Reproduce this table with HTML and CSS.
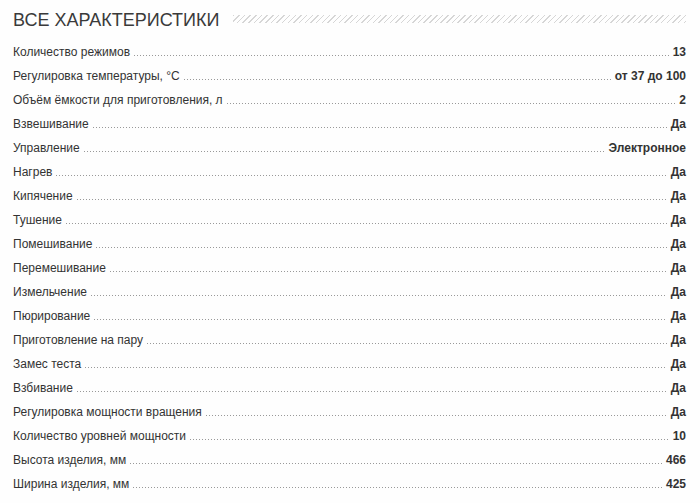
FILE: index.html
```html
<!DOCTYPE html>
<html lang="ru">
<head>
<meta charset="utf-8">
<title>Все характеристики</title>
<link rel="stylesheet" href="styles.css">
</head>
<body>
<div class="specs">
  <div class="heading">
    <h2 class="title">ВСЕ ХАРАКТЕРИСТИКИ</h2>
    <div class="hatch"></div>
  </div>
  <ul class="list">
    <li class="row"><span class="label">Количество режимов</span><span class="dots"></span><span class="value">13</span></li>
    <li class="row"><span class="label">Регулировка температуры, °C</span><span class="dots"></span><span class="value">от 37 до 100</span></li>
    <li class="row"><span class="label">Объём ёмкости для приготовления, л</span><span class="dots"></span><span class="value">2</span></li>
    <li class="row"><span class="label">Взвешивание</span><span class="dots"></span><span class="value">Да</span></li>
    <li class="row"><span class="label">Управление</span><span class="dots"></span><span class="value">Электронное</span></li>
    <li class="row"><span class="label">Нагрев</span><span class="dots"></span><span class="value">Да</span></li>
    <li class="row"><span class="label">Кипячение</span><span class="dots"></span><span class="value">Да</span></li>
    <li class="row"><span class="label">Тушение</span><span class="dots"></span><span class="value">Да</span></li>
    <li class="row"><span class="label">Помешивание</span><span class="dots"></span><span class="value">Да</span></li>
    <li class="row"><span class="label">Перемешивание</span><span class="dots"></span><span class="value">Да</span></li>
    <li class="row"><span class="label">Измельчение</span><span class="dots"></span><span class="value">Да</span></li>
    <li class="row"><span class="label">Пюрирование</span><span class="dots"></span><span class="value">Да</span></li>
    <li class="row"><span class="label">Приготовление на пару</span><span class="dots"></span><span class="value">Да</span></li>
    <li class="row"><span class="label">Замес теста</span><span class="dots"></span><span class="value">Да</span></li>
    <li class="row"><span class="label">Взбивание</span><span class="dots"></span><span class="value">Да</span></li>
    <li class="row"><span class="label">Регулировка мощности вращения</span><span class="dots"></span><span class="value">Да</span></li>
    <li class="row"><span class="label">Количество уровней мощности</span><span class="dots"></span><span class="value">10</span></li>
    <li class="row"><span class="label">Высота изделия, мм</span><span class="dots"></span><span class="value">466</span></li>
    <li class="row"><span class="label">Ширина изделия, мм</span><span class="dots"></span><span class="value">425</span></li>
  </ul>
</div>
</body>
</html>
```
FILE: styles.css
```css
html, body {
  margin: 0;
  padding: 0;
  background: #fefefe;
}
body {
  font-family: "Liberation Sans", Arial, sans-serif;
  color: #333;
}
.specs {
  padding: 8px 14px 0 13px;
}
.heading {
  display: flex;
  align-items: center;
  gap: 14px;
  height: 24px;
}
.title {
  margin: 0;
  font-size: 18px;
  font-weight: normal;
  color: #3a3a3a;
  line-height: 24px;
  white-space: nowrap;
}
.hatch {
  flex: 1;
  height: 8px;
  margin-top: -2px;
  background: repeating-linear-gradient(135deg, #d6d6d6 0, #d6d6d6 1px, transparent 1px, transparent 4px);
}
.list {
  list-style: none;
  margin: 12px 0 0;
  padding: 0;
}
.row {
  display: flex;
  align-items: baseline;
  height: 24px;
  line-height: 16px;
  font-size: 12px;
}
.label {
  white-space: nowrap;
}
.dots {
  flex: 1;
  margin: 0 4px;
  height: 1px;
  background: linear-gradient(to right, #999 1px, transparent 1px) repeat-x left bottom / 3px 1px;
}
.value {
  font-weight: bold;
  white-space: nowrap;
}
```
